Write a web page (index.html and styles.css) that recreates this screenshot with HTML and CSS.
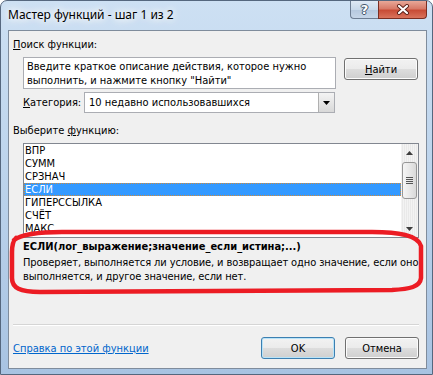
FILE: index.html
```html
<!DOCTYPE html>
<html lang="ru">
<head>
    <meta charset="UTF-8">
    <title>Мастер функций - шаг 1 из 2</title>
    <link rel="stylesheet" href="styles.css">
</head>
<body>
    <div class="window">
        <div class="titlebar">
            <span class="title">Мастер функций - шаг 1 из 2</span>
            <div class="caption-buttons">
                <div class="cap-btn help">?</div>
                <div class="cap-btn close">
                    <svg width="14" height="11" viewBox="0 0 14 11">
                        <path d="M3 2 L11 9 M11 2 L3 9" stroke="#5a1f17" stroke-width="4" stroke-linecap="round"/>
                        <path d="M3 2 L11 9 M11 2 L3 9" stroke="#ffffff" stroke-width="2.2" stroke-linecap="round"/>
                    </svg>
                </div>
            </div>
        </div>

        <div class="client">
            <div class="label"><u>П</u>оиск функции:</div>

            <div class="search-row">
                <div class="search-box">Введите краткое описание действия, которое нужно выполнить, и нажмите кнопку "Найти"</div>
                <button class="btn"><u>Н</u>айти</button>
            </div>

            <div class="category-row">
                <span class="label"><u>К</u>атегория:</span>
                <div class="combo">
                    <span class="combo-text">10 недавно использовавшихся</span>
                    <div class="combo-arrow">
                        <svg width="7" height="4" viewBox="0 0 7 4"><polygon points="0,0 7,0 3.5,4" fill="#000"/></svg>
                    </div>
                </div>
            </div>

            <div class="label list-label">Выберите <u>ф</u>ункцию:</div>

            <div class="listbox">
                <ul class="items">
                    <li>ВПР</li>
                    <li>СУММ</li>
                    <li>СРЗНАЧ</li>
                    <li class="selected">ЕСЛИ</li>
                    <li>ГИПЕРССЫЛКА</li>
                    <li>СЧЁТ</li>
                    <li>МАКС</li>
                </ul>
                <div class="scrollbar">
                    <div class="sb-arrow">
                        <svg width="7" height="4" viewBox="0 0 7 4"><polygon points="0,4 7,4 3.5,0" fill="#3d3d3d"/></svg>
                    </div>
                    <div class="sb-track">
                        <div class="sb-thumb">
                            <div class="grip"></div>
                        </div>
                    </div>
                    <div class="sb-arrow">
                        <svg width="7" height="4" viewBox="0 0 7 4"><polygon points="0,0 7,0 3.5,4" fill="#3d3d3d"/></svg>
                    </div>
                </div>
            </div>

            <div class="syntax">ЕСЛИ(лог_выражение;значение_если_истина;...)</div>
            <div class="desc">Проверяет, выполняется ли условие, и возвращает одно значение, если оно выполняется, и другое значение, если нет.</div>

            <div class="spacer"></div>
            <div class="sep"></div>

            <div class="footer">
                <a class="help-link" href="#">Справка по этой функции</a>
                <button class="btn default">OK</button>
                <button class="btn">Отмена</button>
            </div>
        </div>

        <!-- hand-drawn red mark around the description -->
        <svg class="annotation" width="433" height="375" viewBox="0 0 433 375">
            <path d="M14 240 C 22 234, 40 232, 62 232 L 372 232 C 398 232, 418 235, 421 246 L 421 278 C 420 287, 410 289, 392 290 L 40 292 C 20 292, 12 288, 12 278 L 12 252 C 12 245, 13 241, 16 238"
                  fill="none" stroke="#ec1c24" stroke-width="4.5" stroke-linecap="round"/>
        </svg>
    </div>
</body>
</html>
```

FILE: styles.css
```css
body {
    margin: 0;
    width: 433px;
    height: 375px;
    overflow: hidden;
    background: #ffffff;
}
.window {
    position: relative;
    width: 433px;
    height: 375px;
    box-sizing: border-box;
    border: 1px solid #55677e;
    border-radius: 7px 7px 0 0;
    background: linear-gradient(180deg, #cde0f3 0%, #bdd4ec 45%, #a8c3e2 100%);
    display: flex;
    flex-direction: column;
    font-family: "DejaVu Sans Condensed", "DejaVu Sans", sans-serif;
    font-size: 11px;
    color: #000;
}
.titlebar {
    height: 29px;
    display: flex;
    align-items: flex-start;
}
.title {
    margin: 6px 0 0 7px;
    font-family: "Noto Sans", sans-serif;
    font-size: 12px;
    line-height: 16px;
    text-shadow: 0 0 6px #ffffff, 0 0 10px #ffffff, 0 0 14px #ffffff;
}
.caption-buttons {
    margin-left: auto;
    margin-right: 5px;
    display: flex;
}
.cap-btn {
    height: 18px;
    display: flex;
    align-items: center;
    justify-content: center;
    box-sizing: border-box;
    border: 1px solid #6d7d92;
    border-top: none;
}
.help {
    width: 28px;
    border-right: none;
    border-radius: 0 0 0 4px;
    background: linear-gradient(180deg, #dfe9f4 0%, #c9d9ea 50%, #b5c8de 51%, #c6d6e8 100%);
    font-family: "DejaVu Sans", sans-serif;
    font-weight: bold;
    font-size: 13px;
    color: #ffffff;
    text-shadow: 0 0 1px #33445a, 1px 0 0 #4a5a70, -1px 0 0 #4a5a70, 0 1px 0 #4a5a70, 0 -1px 0 #4a5a70;
}
.close {
    width: 49px;
    border-color: #7a2e22;
    border-radius: 0 0 4px 0;
    background: linear-gradient(180deg, #e8a898 0%, #d77a68 45%, #c84c36 55%, #d9735c 100%);
}
.client {
    width: 419px;
    height: 339px;
    margin-left: 7px;
    box-sizing: border-box;
    border: 1px solid #7f8c9c;
    background: #f0f0f0;
    padding: 7px 7px 9px 4px;
    display: flex;
    flex-direction: column;
}
.label {
    line-height: 13px;
    white-space: nowrap;
}
.search-row {
    margin: 6px 0 0 10px;
    display: flex;
    align-items: flex-start;
}
.search-box {
    width: 313px;
    height: 32px;
    box-sizing: border-box;
    border: 1px solid #abadb3;
    background: #ffffff;
    padding: 2px 3px;
    line-height: 14px;
}
.btn {
    width: 74px;
    height: 22px;
    margin-left: 8px;
    margin-top: 1px;
    box-sizing: border-box;
    border: 1px solid #707070;
    border-radius: 3px;
    background: linear-gradient(180deg, #f2f2f2 0%, #ebebeb 50%, #dddddd 51%, #cfcfcf 100%);
    box-shadow: inset 0 0 0 1px #fcfcfc;
    font-family: inherit;
    font-size: 11px;
    color: #000;
    padding: 0;
}
.category-row {
    margin: 3px 0 0 10px;
    display: flex;
    align-items: center;
}
.category-row .label {
    width: 61px;
}
.combo {
    width: 251px;
    height: 21px;
    box-sizing: border-box;
    border: 1px solid #abadb3;
    background: #ffffff;
    display: flex;
    align-items: center;
}
.combo-text {
    flex: 1;
    padding-left: 4px;
}
.combo-arrow {
    width: 16px;
    height: 19px;
    box-sizing: border-box;
    border-left: 1px solid #b0b0b0;
    background: linear-gradient(180deg, #f4f4f4 0%, #e6e6e6 50%, #d8d8d8 100%);
    display: flex;
    align-items: center;
    justify-content: center;
}
.list-label {
    margin-top: 11px;
}
.listbox {
    width: 396px;
    height: 95px;
    margin: 6px 0 0 10px;
    box-sizing: border-box;
    border: 1px solid #828790;
    background: #ffffff;
    display: flex;
}
.items {
    flex: 1;
    margin: 0;
    padding: 0;
    list-style: none;
}
.items li {
    height: 13px;
    line-height: 13px;
    padding-left: 1px;
    box-sizing: border-box;
}
.items li.selected {
    background: #3399ff;
    color: #ffffff;
    border: 1px dotted #d08a3a;
    line-height: 11px;
    padding-left: 0;
}
.scrollbar {
    width: 17px;
    display: flex;
    flex-direction: column;
    background: repeating-linear-gradient(90deg, #f3f3f3 0 1px, #e9e9e9 1px 2px);
}
.sb-arrow {
    height: 17px;
    display: flex;
    align-items: center;
    justify-content: center;
}
.sb-track {
    flex: 1;
}
.sb-thumb {
    width: 15px;
    height: 37px;
    margin: 1px 0 0 1px;
    box-sizing: border-box;
    border: 1px solid #979797;
    border-radius: 3px;
    background: linear-gradient(90deg, #f5f5f5 0%, #e8e8e8 50%, #d9d9d9 100%);
    display: flex;
    align-items: center;
    justify-content: center;
}
.grip {
    width: 7px;
    height: 7px;
    background: repeating-linear-gradient(180deg, #555 0 1px, transparent 1px 2px);
}
.syntax {
    margin: 2px 0 0 10px;
    font-weight: bold;
    line-height: 14px;
    white-space: nowrap;
}
.desc {
    width: 400px;
    margin: 2px 0 0 10px;
    line-height: 14px;
    letter-spacing: -0.1px;
}
.spacer {
    flex: 1;
}
.sep {
    height: 1px;
    background: #d5d5d5;
    border-bottom: 1px solid #ffffff;
}
.footer {
    margin-top: 11px;
    display: flex;
    align-items: center;
}
.help-link {
    color: #0066cc;
    text-decoration: underline;
    margin-right: auto;
}
.footer .btn {
    margin-top: 0;
    margin-left: 10px;
}
.btn.default {
    border-color: #3c7fb1;
    box-shadow: inset 0 0 0 1px #b8e3f8;
}
.annotation {
    position: absolute;
    left: -1px;
    top: -1px;
    pointer-events: none;
}
```
